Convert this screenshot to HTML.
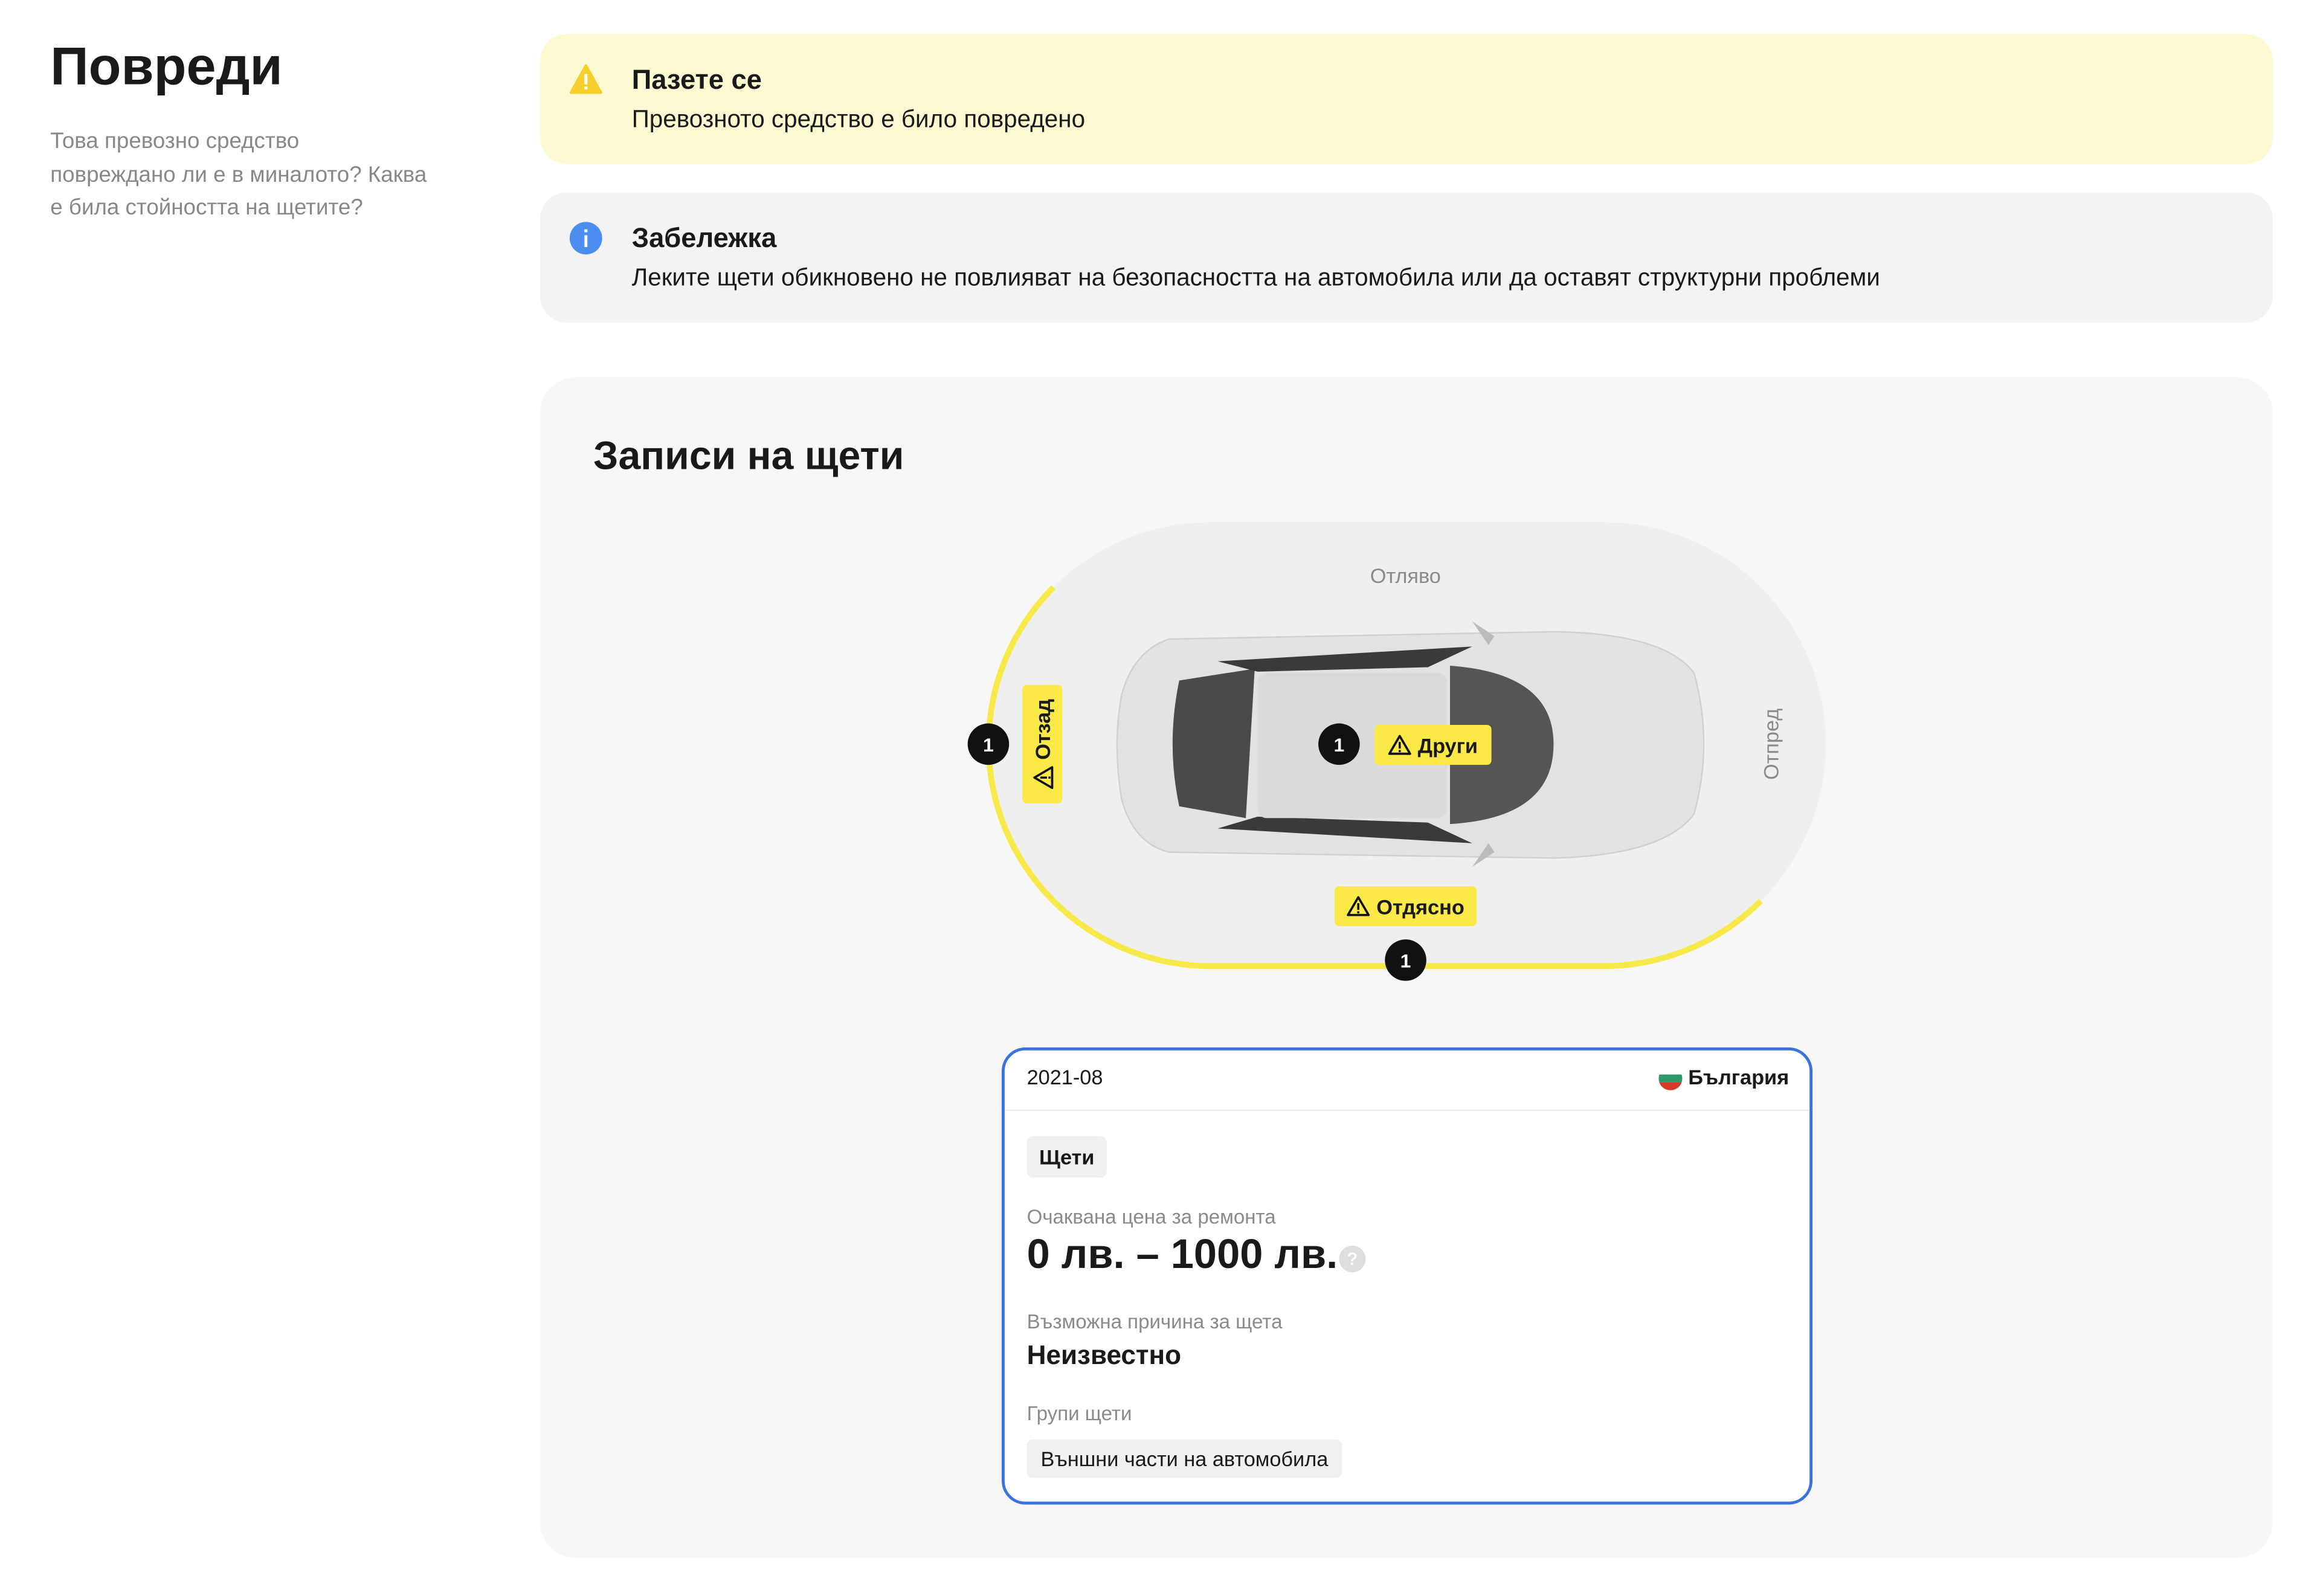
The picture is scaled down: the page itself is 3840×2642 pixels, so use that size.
<!DOCTYPE html>
<html><head><meta charset="utf-8">
<style>
*{margin:0;padding:0;box-sizing:border-box}
html,body{width:3840px;height:2641px;overflow:hidden;background:#fff}
#w{position:absolute;left:0;top:0;width:1568px;height:1079px;transform:scale(2.449);transform-origin:0 0;font-family:"Liberation Sans","Noto Sans CJK SC",sans-serif;color:#1a1a1a}
.a{position:absolute;white-space:nowrap}
.box{position:absolute;left:365px;width:1171px;border-radius:18px}
.lbl{position:absolute;background:#fbe947;border-radius:3px;font-weight:bold;font-size:14px;display:flex;align-items:center;justify-content:center;gap:4px}
.dot{position:absolute;width:28px;height:28px;border-radius:50%;background:#111;color:#fff;font-weight:bold;font-size:13px;display:flex;align-items:center;justify-content:center;transform:translate(-50%,-50%)}
.chip{position:absolute;background:#f0f0f0;border-radius:4px;font-size:14px;display:flex;align-items:center;justify-content:center}
.g{color:#8a8a8a;font-size:13.5px}
</style></head><body><div id="w">
<div class="a" style="left:34px;top:24px;font-size:36px;font-weight:bold">Повреди</div>
<div class="a" style="left:34px;top:85px;font-size:15px;line-height:22.5px;color:#888;white-space:normal;width:285px">Това превозно средство<br>повреждано ли е в миналото? Каква<br>е била стойността на щетите?</div>

<div class="box" style="top:23px;height:88px;background:#fdf9d3"></div>
<svg class="a" style="left:385px;top:43px" width="22" height="21" viewBox="0 0 22 21"><path d="M11 1.5 L21 19.5 H1 Z" fill="#f7cf2c" stroke="#f7cf2c" stroke-width="2" stroke-linejoin="round"/><rect x="10" y="7" width="2" height="7" fill="#fff"/><rect x="10" y="15.5" width="2" height="2" fill="#fff"/></svg>
<div class="a" style="left:427px;top:43px;font-size:18.5px;font-weight:bold">Пазете се</div>
<div class="a" style="left:427px;top:72px;font-size:16.5px">Превозното средство е било повредено</div>

<div class="box" style="top:130px;height:88px;background:#f3f3f3"></div>
<svg class="a" style="left:385px;top:150px" width="22" height="22" viewBox="0 0 22 22"><circle cx="11" cy="11" r="11" fill="#4c8ef0"/><rect x="10" y="9" width="2" height="8" fill="#fff"/><rect x="10" y="5" width="2" height="2" fill="#fff"/></svg>
<div class="a" style="left:427px;top:150px;font-size:18.5px;font-weight:bold">Забележка</div>
<div class="a" style="left:427px;top:179px;font-size:16.5px">Леките щети обикновено не повлияват на безопасността на автомобила или да оставят структурни проблеми</div>

<div class="box" style="top:255px;height:798px;background:#f7f7f7;border-radius:24px"></div>
<div class="a" style="left:401px;top:293px;font-size:27px;font-weight:bold">Записи на щети</div>

<svg class="a" style="left:660px;top:345px" width="590" height="320" viewBox="660 345 590 320">
<path d="M818 353 H1084 A150 150 0 0 1 1084 653 H818 A150 150 0 0 1 818 353 Z" fill="#efefef"/>
<path d="M712 397 A150 150 0 0 0 818 653 H1084 A150 150 0 0 0 1190 609" fill="none" stroke="#f8e94a" stroke-width="4"/>
<path d="M790 432 Q766 440 758 470 Q752 503 758 540 Q766 570 790 576 L1050 580 Q1125 578 1145 550 Q1158 503 1145 455 Q1125 428 1050 427 Z" fill="#e2e2e2" stroke="#d0d0d0"/>
<path d="M797 460 L848 452 L842 553 L797 545 Q788 503 797 460 Z" fill="#4a4a4a"/>
<path d="M980 450 Q1050 455 1050 503 Q1050 553 980 557 L980 450 Z" fill="#555"/>
<path d="M823 447 L995 437 L965 451 L850 454 Z" fill="#3a3a3a"/>
<path d="M823 560 L995 570 L965 556 L850 552 Z" fill="#3a3a3a"/>
<rect x="850" y="455" width="128" height="98" rx="6" fill="#dadada"/>
<path d="M995 420 L1010 430 L1006 436 Z" fill="#bbb"/>
<path d="M995 586 L1010 576 L1006 570 Z" fill="#bbb"/>
</svg>
<div class="a g" style="left:926px;top:381px;font-size:14px">Отляво</div>
<div class="a g" style="left:1197px;top:503px;font-size:14px;transform:translate(-50%,-50%) rotate(-90deg)">Отпред</div>

<div class="lbl" style="left:691px;top:463px;width:27px;height:80px"><div style="transform:rotate(-90deg);display:flex;align-items:center;gap:4px;white-space:nowrap"><svg width="16" height="15" viewBox="0 0 16 15"><path d="M8 1.5 L15 13.5 H1 Z" fill="none" stroke="#111" stroke-width="1.5" stroke-linejoin="round"/><rect x="7.3" y="5.5" width="1.4" height="4.5"/><rect x="7.3" y="11" width="1.4" height="1.4"/></svg>Отзад</div></div>
<div class="lbl" style="left:929px;top:490px;width:79px;height:27px"><svg width="16" height="15" viewBox="0 0 16 15"><path d="M8 1.5 L15 13.5 H1 Z" fill="none" stroke="#111" stroke-width="1.5" stroke-linejoin="round"/><rect x="7.3" y="5.5" width="1.4" height="4.5"/><rect x="7.3" y="11" width="1.4" height="1.4"/></svg>Други</div>
<div class="lbl" style="left:902px;top:599px;width:96px;height:27px"><svg width="16" height="15" viewBox="0 0 16 15"><path d="M8 1.5 L15 13.5 H1 Z" fill="none" stroke="#111" stroke-width="1.5" stroke-linejoin="round"/><rect x="7.3" y="5.5" width="1.4" height="4.5"/><rect x="7.3" y="11" width="1.4" height="1.4"/></svg>Отдясно</div>
<div class="dot" style="left:668px;top:503px">1</div>
<div class="dot" style="left:905px;top:503px">1</div>
<div class="dot" style="left:950px;top:649px">1</div>

<div class="a" style="left:677px;top:708px;width:548px;height:309px;border:2px solid #3a72e0;border-radius:16px;background:#fff"></div>
<div class="a" style="left:694px;top:720px;font-size:14px">2021-08</div>
<svg class="a" style="left:1121px;top:721px" width="16" height="16" viewBox="0 0 16 16"><clipPath id="c"><circle cx="8" cy="8" r="8"/></clipPath><g clip-path="url(#c)"><rect width="16" height="5.3" fill="#fff"/><rect y="5.3" width="16" height="5.4" fill="#2e9a6a"/><rect y="10.7" width="16" height="5.3" fill="#d63a2a"/></g></svg>
<div class="a" style="left:1141px;top:720px;font-size:14px;font-weight:bold">България</div>
<div class="a" style="left:679px;top:750px;width:544px;height:1px;background:#ececec"></div>
<div class="chip" style="left:694px;top:768px;width:54px;height:28px;font-weight:bold">Щети</div>
<div class="a g" style="left:694px;top:815px">Очаквана цена за ремонта</div>
<div class="a" style="left:694px;top:832px;font-size:28px;font-weight:bold">0 лв. – 1000 лв.</div>
<div class="a" style="left:905px;top:842px;width:18px;height:18px;border-radius:50%;background:#ddd;color:#fff;font-size:12px;font-weight:bold;text-align:center;line-height:18px">?</div>
<div class="a g" style="left:694px;top:886px">Възможна причина за щета</div>
<div class="a" style="left:694px;top:906px;font-size:18px;font-weight:bold">Неизвестно</div>
<div class="a g" style="left:694px;top:948px">Групи щети</div>
<div class="chip" style="left:694px;top:973px;width:213px;height:26px">Външни части на автомобила</div>
</div></body></html>
